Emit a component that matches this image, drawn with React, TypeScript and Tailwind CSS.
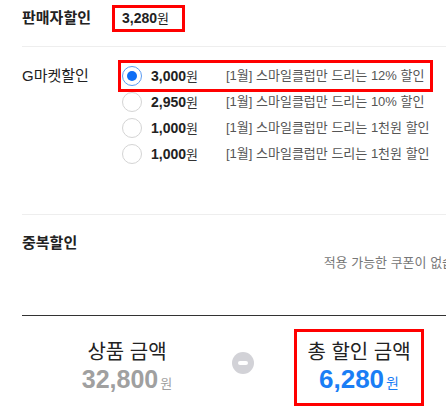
import React from 'react';

const options = [
  { amount: '3,000', desc: '[1월] 스마일클럽만 드리는 12% 할인', selected: true },
  { amount: '2,950', desc: '[1월] 스마일클럽만 드리는 10% 할인', selected: false },
  { amount: '1,000', desc: '[1월] 스마일클럽만 드리는 1천원 할인', selected: false },
  { amount: '1,000', desc: '[1월] 스마일클럽만 드리는 1천원 할인', selected: false },
];

function Radio({ checked }: { checked: boolean }) {
  if (checked) {
    return (
      <span className="flex h-[20px] w-[20px] shrink-0 items-center justify-center rounded-full border border-[#5c9cf2] bg-white">
        <span className="h-[10px] w-[10px] rounded-full bg-[#0f6ef5]" />
      </span>
    );
  }
  return <span className="h-[20px] w-[20px] shrink-0 rounded-full border border-[#d4d4d4] bg-white" />;
}

export default function App() {
  return (
    <div
      className="h-[408px] w-[446px] overflow-hidden bg-white text-[#222]"
      style={{ fontFamily: '"Liberation Sans", "Noto Sans CJK KR", sans-serif' }}
    >
      <div className="ml-[22px] w-[456px]">
        {/* 판매자할인 */}
        <div className="flex items-center border-b border-[#eeeeee] pt-[5px] pb-[14px]">
          <div className="w-[90px] pb-[2px] text-[15px] font-bold leading-[20px]">판매자할인</div>
          <div className="flex h-[27px] w-[73px] items-center border-[3px] border-[#ff0000] pl-[7px]">
            <span className="text-[14px] font-bold">3,280</span>
            <span className="text-[13px]">원</span>
          </div>
        </div>

        {/* G마켓할인 */}
        <div className="flex border-b border-[#eeeeee] pt-[16px] pb-[47px]">
          <div className="w-[100px] pt-[1px] text-[15px] leading-[24px]">G마켓할인</div>
          <div className="flex flex-col">
            {options.map((o, i) => (
              <div key={i} className="relative flex h-[26px] items-center">
                {o.selected && (
                  <div className="pointer-events-none absolute -top-[3px] -bottom-[3px] -left-[4px] w-[315px] border-[3px] border-[#ff0000]" />
                )}
                <Radio checked={o.selected} />
                <div className="ml-[9px] w-[75px] whitespace-nowrap">
                  <span className="text-[14px] font-bold">{o.amount}</span>
                  <span className="text-[13px] text-[#333]">원</span>
                </div>
                <div className="whitespace-nowrap text-[13px] text-[#555]">{o.desc}</div>
              </div>
            ))}
          </div>
        </div>

        {/* 중복할인 */}
        <div className="border-b border-[#333] pt-[18px] pb-[42px]">
          <div className="text-[15px] font-bold leading-[20px]">중복할인</div>
          <div className="whitespace-nowrap text-right text-[13px] leading-[20px] text-[#777]">
            적용 가능한 쿠폰이 없습니다
          </div>
        </div>

        {/* 금액 요약 */}
        <div className="flex items-start pt-[13px]">
          <div className="flex w-[210px] flex-col items-center pt-[10px]">
            <div className="text-[20px] leading-[26px] text-[#222]">상품 금액</div>
            <div className="flex items-baseline leading-[28px]">
              <span className="text-[25px] font-bold text-[#a0a0a0]">32,800</span>
              <span className="ml-[2px] text-[13px] text-[#a0a0a0]">원</span>
            </div>
          </div>
          <div className="mt-[23px] flex h-[22px] w-[22px] items-center justify-center rounded-full bg-[#d2d2d7]">
            <span className="h-[4px] w-[10px] rounded-full bg-white" />
          </div>
          <div className="ml-[40px] flex w-[130px] flex-col items-center border-[3px] border-[#ff0000] pt-[7px] pb-[6px]">
            <div className="text-[20px] leading-[26px] text-[#222]">총 할인 금액</div>
            <div className="flex items-baseline leading-[28px]">
              <span className="text-[26px] font-bold text-[#1a7ef5]">6,280</span>
              <span className="ml-[2px] text-[14px] text-[#1a7ef5]">원</span>
            </div>
          </div>
        </div>
      </div>
    </div>
  );
}
